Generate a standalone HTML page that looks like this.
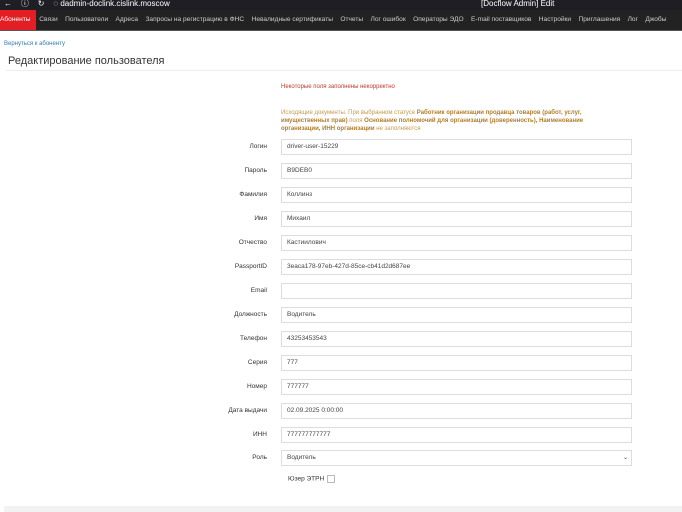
<!DOCTYPE html>
<html><head><meta charset="utf-8"><style>
body{margin:0;width:682px;height:512px;overflow:hidden;background:#fff;font-family:"Liberation Sans",sans-serif;position:relative}
.top{position:absolute;left:0;top:0;width:682px;height:10px;background:#1f1e25;color:#fff;font-size:8px;line-height:8px;overflow:hidden}
.nav{position:absolute;left:0;top:10px;width:682px;height:20px;background:#222;border-bottom:1px solid #555;white-space:nowrap;font-size:6.6px;line-height:20px;color:#ccc;overflow:hidden}
.nav span{display:inline-block;padding:0 3.7px}
.nav .a{background:#e31e24;color:#fff;padding:0 5px 0 0}
.back{position:absolute;left:4px;top:41px;font-size:6px;color:#337ab7}
h1{position:absolute;left:8px;top:55px;margin:0;font-weight:normal;font-size:11px;color:#333}
.hr{position:absolute;left:6px;right:0;top:70px;border-top:1px solid #eee}
.err{position:absolute;left:281px;top:84px;font-size:6px;color:#c0392b}
.info{position:absolute;left:281px;top:109px;width:330px;font-size:6px;line-height:8px;color:#c59a4e}
.info b{color:#b07d2e}
.row{position:absolute;left:0;width:682px;height:16px}
.row label{position:absolute;right:415px;top:0;line-height:16px;font-size:6.5px;color:#333}
.row div{position:absolute;left:281px;width:344px;height:14px;border:1px solid #ddd;padding-left:5px;font-size:6.5px;line-height:14px;color:#444}
.chk{position:absolute;left:288px;top:475px;font-size:6.5px;color:#333}
.chk i{display:inline-block;width:6px;height:6px;border:1px solid #bbb;vertical-align:middle;margin-left:3px}
.foot{position:absolute;left:4px;right:0;top:506px;height:6px;background:#f2f2f2}
</style></head><body>
<div class="top"><span style="margin-left:4px">←&nbsp;&nbsp;&nbsp; ⓘ &nbsp;&nbsp; ↻ &nbsp;&nbsp; ◌ dadmin-doclink.cislink.moscow</span><span style="position:absolute;left:481px">[Docflow Admin] Edit</span></div>
<div class="nav"><span class="a">Абоненты</span><span>Связи</span><span>Пользователи</span><span>Адреса</span><span>Запросы на регистрацию в ФНС</span><span>Невалидные сертификаты</span><span>Отчеты</span><span>Лог ошибок</span><span>Операторы ЭДО</span><span>E-mail поставщиков</span><span>Настройки</span><span>Приглашения</span><span>Лог</span><span>Джобы</span></div>
<div class="back">Вернуться к абоненту</div>
<h1>Редактирование пользователя</h1>
<div class="hr"></div>
<div class="err">Некоторые поля заполнены некорректно</div>
<div class="info">Исходящие документы. При выбранном статусе <b>Работник организации продавца товаров (работ, услуг, имущественных прав)</b> поля <b>Основание полномочий для организации (доверенность), Наименование организации, ИНН организации</b> не заполняются</div>
<div class="row" style="top:139px"><label>Логин</label><div>driver-user-15229</div></div>
<div class="row" style="top:163px"><label>Пароль</label><div>B9DEB0</div></div>
<div class="row" style="top:187px"><label>Фамилия</label><div>Коллинз</div></div>
<div class="row" style="top:211px"><label>Имя</label><div>Михаил</div></div>
<div class="row" style="top:235px"><label>Отчество</label><div>Кастиилович</div></div>
<div class="row" style="top:259px"><label>PassportID</label><div>3eaca178-97eb-427d-85ce-cb41d2d687ee</div></div>
<div class="row" style="top:283px"><label>Email</label><div></div></div>
<div class="row" style="top:307px"><label>Должность</label><div>Водитель</div></div>
<div class="row" style="top:331px"><label>Телефон</label><div>43253453543</div></div>
<div class="row" style="top:355px"><label>Серия</label><div>777</div></div>
<div class="row" style="top:379px"><label>Номер</label><div>777777</div></div>
<div class="row" style="top:403px"><label>Дата выдачи</label><div>02.09.2025 0:00:00</div></div>
<div class="row" style="top:427px"><label>ИНН</label><div>777777777777</div></div>
<div class="row" style="top:450px"><label>Роль</label><div>Водитель<span style="position:absolute;right:3px;font-size:6px">⌄</span></div></div>
<div class="chk">Юзер ЭТРН<i></i></div>
<div class="foot"></div>
</body></html>
